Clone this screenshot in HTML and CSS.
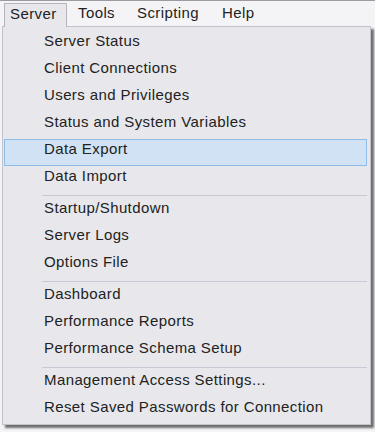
FILE: index.html
```html
<!DOCTYPE html>
<html lang="en">
<head>
    <meta charset="UTF-8">
    <meta name="viewport" content="width=device-width, initial-scale=1.0">
    <title>Server Menu</title>
    <link rel="stylesheet" href="styles.css">
</head>
<body>
    <div class="menubar">
        <div class="top-item open">Server</div>
        <div class="top-item tools">Tools</div>
        <div class="top-item scripting">Scripting</div>
        <div class="top-item help">Help</div>
    </div>

    <div class="menu">
        <div class="item">Server Status</div>
        <div class="item">Client Connections</div>
        <div class="item">Users and Privileges</div>
        <div class="item">Status and System Variables</div>
        <div class="item active">Data Export</div>
        <div class="item">Data Import</div>
        <div class="separator"></div>
        <div class="item">Startup/Shutdown</div>
        <div class="item">Server Logs</div>
        <div class="item">Options File</div>
        <div class="separator"></div>
        <div class="item">Dashboard</div>
        <div class="item">Performance Reports</div>
        <div class="item">Performance Schema Setup</div>
        <div class="separator"></div>
        <div class="item">Management Access Settings...</div>
        <div class="item">Reset Saved Passwords for Connection</div>
    </div>
</body>
</html>
```

FILE: styles.css
```css
body {
    margin: 0;
    font-family: "Liberation Sans", Arial, sans-serif;
    font-size: 15px;
    letter-spacing: 0.4px;
    color: #222;
    background-color: #f4f4f7;
    height: 432px;
    overflow: hidden;
}

.menubar {
    display: flex;
    height: 25px;
    border-top: 1px solid #9c9ca0;
    padding-left: 4px;
}

.top-item {
    padding: 3px 7px 0 6px;
    line-height: 18px;
}

.top-item.open {
    margin-top: 2px;
    padding-top: 1px;
    padding-left: 5px;
    width: 49px;
    background-color: #e8e8ec;
    border: 1px solid #b4b4bc;
    border-bottom: none;
    margin-bottom: -1px;
    position: relative;
    z-index: 1;
}

.top-item.tools {
    margin-left: 5px;
}

.top-item.scripting {
    margin-left: 9px;
}

.top-item.help {
    margin-left: 10px;
}

.menu {
    margin-left: 2px;
    width: 367px;
    background-color: #e8e8ec;
    border: 1px solid #c2c2cc;
    padding: 4px 0 0;
    box-shadow: 3px 3px 2px rgba(0, 0, 0, 0.55);
}

.item {
    height: 25px;
    line-height: 17px;
    margin: 0 3px 0 1px;
    padding-left: 39px;
    border: 1px solid transparent;
    white-space: nowrap;
}

.item.active {
    background-color: #d0e2f3;
    border-color: #8fbde8;
}

.separator {
    height: 1px;
    margin: 2px 3px 2px 39px;
    background-color: #c9c9d6;
}
```
